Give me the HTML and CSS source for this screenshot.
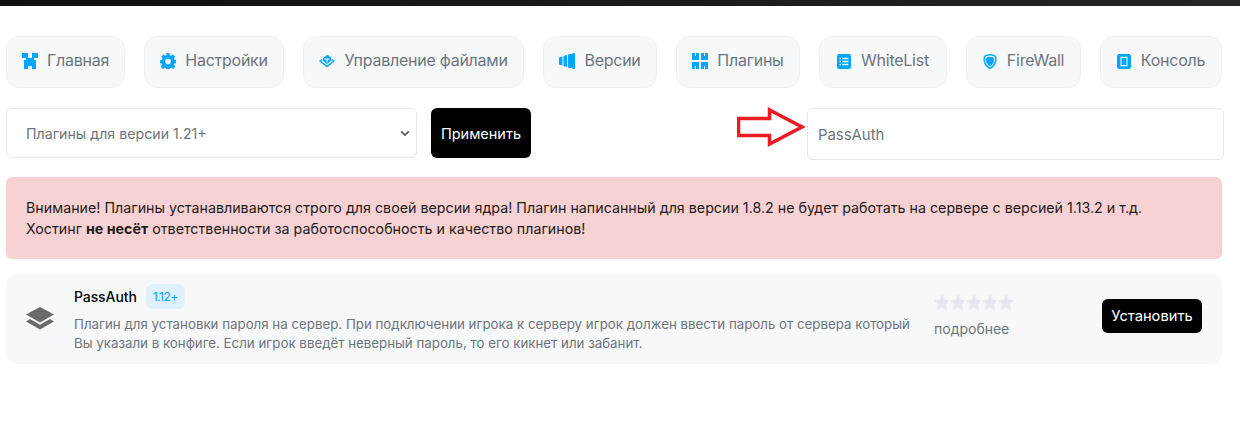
FILE: index.html
```html
<html>
    <head>
        <title>Плагины</title>
        <meta charset="utf-8">
        <link rel="stylesheet" href="styles.css">
    </head>
    <body>
        <div class="topbar"></div>
        <div class="container">

            <div class="nav">
                <a class="nav-btn nav-home">
                    <svg class="ico" viewBox="0 0 16 16"><path d="M0 0h6v5h4V0h6v5h-4v2h2v9h-4v-3H6v3H2V7h2V5H0z"/></svg>
                    Главная
                </a>
                <a class="nav-btn nav-settings">
                    <svg class="ico" viewBox="0 0 16 16"><path fill-rule="evenodd" d="M6.500 0h3l.4 2.200 1.300.6L13.100 1.500l2.100 2.200-1.300 1.800.5 1.300 2.200.4v3l-2.200.4-.5 1.300 1.300 1.800-2.100 2.200-1.900-1.300-1.300.6-.4 2.200h-3l-.4-2.200-1.300-.6-1.900 1.300L.8 13.700l1.300-1.800-.5-1.300L0 10.300v-3l2.100-.4.500-1.300L1.300 3.700l2.100-2.200 1.900 1.300 1.300-.6zM8 5.600a2.800 2.800 0 1 0 0 5.600 2.800 2.800 0 0 0 0-5.600z"/></svg>
                    Настройки
                </a>
                <a class="nav-btn nav-files">
                    <svg class="ico" viewBox="0 0 16 16">
                        <path d="M3.500 7.500C3.500 5 5 3.800 6.300 3.500 7.300 1.800 9.700 1.800 10.500 3.500 12 3.800 12.500 5.500 12.500 7.500L8 11z"/>
                        <path d="M0 8 2.600 6l.6 1L2 8l6 4.500L14 8l-1.200-1 .6-1L16 8l-8 6.500z"/>
                        <path class="ico-cut" d="M5.500 5.500h5v1H8.500v3h-1v-3h-2z"/>
                    </svg>
                    Управление файлами
                </a>
                <a class="nav-btn nav-versions">
                    <svg class="ico" viewBox="0 0 16 16"><path d="M0 4.500 3.500 3.500v9L0 11.500zM4.500 3 8 2v12l-3.500-1zM9 1.500 16 0v16l-7-1.500z"/></svg>
                    Версии
                </a>
                <a class="nav-btn nav-plugins">
                    <svg class="ico" viewBox="0 0 16 16"><path d="M0 0h3v3h1V0h3v7H0zM9 0h3v3h1V0h3v7H9zM0 9h7v7H4v-3H3v3H0zM9 9h7v7h-3v-3h-1v3H9z"/></svg>
                    Плагины
                </a>
                <a class="nav-btn nav-white">
                    <svg class="ico ico-sm" viewBox="0 0 16 16" preserveAspectRatio="none"><path fill-rule="evenodd" d="M2.500 0h11A2.500 2.500 0 0 1 16 2.500v11a2.500 2.500 0 0 1-2.500 2.500h-11A2.500 2.500 0 0 1 0 13.500v-11A2.500 2.500 0 0 1 2.500 0zM3 4v1.500h1.500V4zm3 0v1.500h7V4zM3 7.200v1.500h1.500V7.200zm3 0v1.500h7V7.200zm-3 3.300V12h1.500v-1.500zm3 0V12h7v-1.500z"/></svg>
                    WhiteList
                </a>
                <a class="nav-btn nav-wall">
                    <svg class="ico ico-sm" viewBox="0 0 16 16" preserveAspectRatio="none"><path fill-rule="evenodd" d="M8 0c2.500 0 5 .8 7 2.200 1 3.800.4 7-1.500 9.800C12 14 10 15.300 8 16c-2-.7-4-2-5.500-4C.6 9.200 0 6 1 2.200 3 .8 5.500 0 8 0zm0 1.700c-2 0-4 .6-5.600 1.600-.6 3 0 5.500 1.500 7.700C5 12.500 6.500 13.500 8 14.200c1.500-.7 3-1.700 4.100-3.200 1.500-2.200 2.100-4.700 1.500-7.700C12 2.300 10 1.700 8 1.700z"/><path d="M8 3c1.700 0 3.200.4 4.500 1.200.4 2.400-.1 4.400-1.300 6.100-.9 1.200-2 2-3.200 2.600-1.200-.6-2.300-1.400-3.200-2.600C3.600 8.600 3.100 6.600 3.500 4.200 4.800 3.400 6.300 3 8 3z"/></svg>
                    FireWall
                </a>
                <a class="nav-btn nav-console">
                    <svg class="ico ico-sm" viewBox="0 0 16 16" preserveAspectRatio="none"><path fill-rule="evenodd" d="M3 0h10a3 3 0 0 1 3 3v10a3 3 0 0 1-3 3H3a3 3 0 0 1-3-3V3a3 3 0 0 1 3-3zm1 3v10h8V3zm1.200 1.200h5.600v7.600H5.200z"/></svg>
                    Консоль
                </a>
            </div>

            <div class="filter">
                <div class="select-box">
                    <span>Плагины для версии 1.21+</span>
                    <svg class="chevron" viewBox="0 0 12 8"><path d="M1.500 1.500 6 6l4.500-4.500"/></svg>
                </div>
                <button class="btn btn-apply" type="button">Применить</button>
                <input class="search" type="text" value="PassAuth">
                <svg class="arrow" viewBox="0 0 70 42"><path d="M1.500 11.500H32.500V3L65 20 32.500 37V28.500H1.500z"/></svg>
            </div>

            <div class="alert">
                Внимание! Плагины устанавливаются строго для своей версии ядра! Плагин написанный для версии 1.8.2 не будет работать на сервере с версией 1.13.2 и т.д.<br>
                Хостинг <b>не несёт</b> ответственности за работоспособность и качество плагинов!
            </div>

            <div class="plugin">
                <svg class="plugin-ico" viewBox="0 0 28 24"><path d="M14 1l14 7.500-14 8-14-8z"/><path d="M4 13l10 5.700L24 13l4 2.500-14 8-14-8z"/></svg>
                <div class="plugin-info">
                    <div class="plugin-head">
                        <span class="plugin-name">PassAuth</span>
                        <span class="badge">1.12+</span>
                    </div>
                    <div class="plugin-desc">Плагин для установки пароля на сервер. При подключении игрока к серверу игрок должен ввести пароль от сервера который<br>Вы указали в конфиге. Если игрок введёт неверный пароль, то его кикнет или забанит.</div>
                </div>
                <div class="plugin-rate">
                    <svg class="stars" viewBox="0 0 80 17">
                        <path id="star" d="M8 0l2.500 5.500 5.500.7-4 4 1 6.300L8 13.600 3 16.500l1-6.300-4-4 5.500-.7z"/>
                        <use href="#star" x="16"/>
                        <use href="#star" x="32"/>
                        <use href="#star" x="48"/>
                        <use href="#star" x="64"/>
                    </svg>
                    <a class="more">подробнее</a>
                </div>
                <button class="btn btn-install" type="button">Установить</button>
            </div>

        </div>
    </body>
</html>
```

FILE: styles.css
```css
html,
body {
    margin: 0;
    background-color: white;
    font-family: "Inter", "Noto Sans", sans-serif;
}
.topbar {
    height: 6px;
    background: linear-gradient(90deg, #101010, #232527);
}
.container {
    padding: 30px 16px 0 6px;
}
.nav {
    display: flex;
    justify-content: space-between;
    width: 1216px;
}
.nav-btn {
    display: flex;
    align-items: center;
    justify-content: center;
    gap: 9px;
    box-sizing: border-box;
    height: 52px;
    padding-bottom: 4px;
    background-color: #f6f8fa;
    border: solid 1px #eff1f4;
    border-radius: 13px;
    color: #6c757d;
    font-size: 16px;
    letter-spacing: -0.25px;
}
.ico {
    width: 16px;
    height: 16px;
    margin-top: 2px;
    fill: #00a6ff;
    flex: none;
}
.ico-sm {
    width: 14px;
    height: 15px;
    margin-right: 1px;
}
.ico-cut {
    fill: white;
}
.nav-home { width: 119px; }
.nav-settings { width: 140px; }
.nav-files { width: 221px; }
.nav-versions { width: 114px; }
.nav-plugins { width: 124px; }
.nav-white { width: 128px; }
.nav-wall { width: 115px; }
.nav-console { width: 122px; }

.filter {
    position: relative;
    display: flex;
    margin-top: 20px;
    height: 52px;
}
.select-box {
    display: flex;
    align-items: center;
    justify-content: space-between;
    box-sizing: border-box;
    width: 411px;
    height: 50px;
    padding: 0 4px 0 19px;
    border: solid 1px #e4e8ef;
    border-radius: 6px;
    color: #6c757d;
    font-size: 14.2px;
}
.chevron {
    width: 10px;
    height: 7px;
    margin-right: 2px;
    fill: none;
    stroke: #555;
    stroke-width: 2;
}
.btn {
    border: none;
    border-radius: 6px;
    background-color: black;
    color: white;
    font-family: inherit;
}
.btn-apply {
    width: 100px;
    height: 50px;
    margin-left: 14px;
    font-size: 14.5px;
}
.search {
    box-sizing: border-box;
    width: 417px;
    height: 52px;
    margin-left: auto;
    padding: 2px 10px 0;
    border: solid 1px #e4e8ef;
    border-radius: 6px;
    color: #6c757d;
    font-family: inherit;
    font-size: 14.9px;
}
.arrow {
    position: absolute;
    left: 731px;
    top: -1px;
    width: 70px;
    height: 42px;
    fill: white;
    stroke: #ed1c24;
    stroke-width: 3.5;
}

.alert {
    box-sizing: border-box;
    width: 1216px;
    height: 82px;
    margin-top: 17px;
    padding: 20px 20px;
    background-color: #f8d1d3;
    border-radius: 6px;
    color: #1c1c1c;
    font-size: 14.25px;
    line-height: 21px;
}
.plugin {
    display: flex;
    box-sizing: border-box;
    width: 1216px;
    height: 90px;
    margin-top: 15px;
    padding: 0 20px;
    background-color: #f7f8fa;
    border-radius: 10px;
}
.plugin-ico {
    width: 28px;
    height: 24px;
    margin: 32px 20px 0 0;
    fill: #6a6a6a;
    flex: none;
}
.plugin-info {
    width: 860px;
    padding-top: 10px;
    flex: none;
}
.plugin-head {
    display: flex;
    align-items: center;
    gap: 9px;
    height: 25px;
}
.plugin-name {
    color: black;
    font-size: 14px;
    font-weight: 500;
    letter-spacing: -0.1px;
}
.badge {
    padding: 5px 7px;
    background-color: #dff1ff;
    border-radius: 7px;
    color: #00a6ff;
    font-size: 12px;
    letter-spacing: -0.5px;
}
.plugin-desc {
    margin-top: 6px;
    color: #6c757d;
    font-size: 13.3px;
    line-height: 19px;
}
.plugin-rate {
    padding-top: 20px;
}
.stars {
    display: block;
    width: 80px;
    height: 17px;
    fill: #e4e9f0;
}
.more {
    display: block;
    margin-top: 9px;
    color: #6c757d;
    font-size: 14px;
    line-height: 17px;
}
.btn-install {
    align-self: flex-start;
    width: 100px;
    height: 34px;
    margin: 25px 0 0 auto;
    font-size: 14.7px;
}
```
